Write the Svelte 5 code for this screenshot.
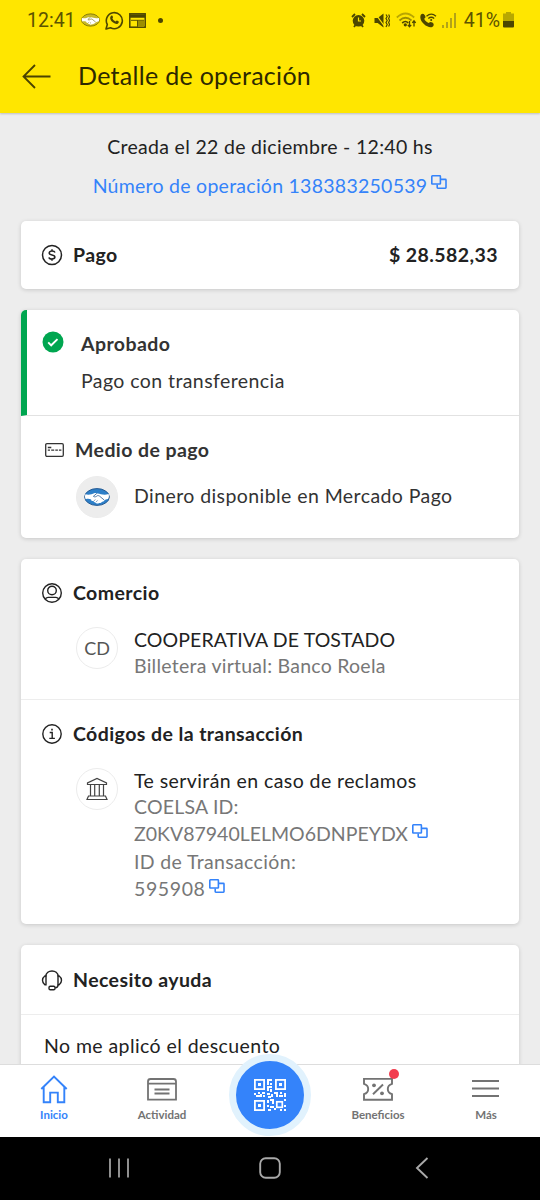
<script>
	const tabs = [
		{ id: 'inicio', label: 'Inicio', active: true },
		{ id: 'actividad', label: 'Actividad' },
		{ id: 'qr', label: '' },
		{ id: 'beneficios', label: 'Beneficios', badge: true },
		{ id: 'mas', label: 'Más' },
	];

	// Loose modules of the QR symbol, [x, y, width, height]
	const modules = [
		[13, 0, 5, 2],
		[13, 2, 2, 4],
		[16, 4, 2, 2],
		[13, 7, 5, 2],
		[13, 9, 2, 3],
		[16, 10, 2, 3],
		[0, 14, 2, 2],
		[4, 13, 2, 2],
		[6, 15, 2, 3],
		[2, 16, 4, 2],
		[8, 13, 3, 2],
		[9, 16, 2, 2],
		[13, 14, 3, 2],
		[17, 15, 2, 3],
		[14, 17, 3, 2],
		[20, 13, 4, 2],
		[22, 15, 2, 3],
		[26, 13, 2, 2],
		[25, 16, 4, 2],
		[30, 14, 2, 4],
		[16, 20, 4, 2],
		[18, 22, 2, 3],
		[13, 21, 2, 3],
		[13, 26, 2, 2],
		[16, 27, 4, 2],
		[14, 30, 3, 2],
		[20, 29, 2, 2],
		[30, 20, 2, 2],
		[30, 26, 2, 2],
		[26, 30, 2, 2],
		[30, 30, 2, 2],
	];
</script>

{#snippet copyIcon()}
	<svg class="copy" width="16" height="14" viewBox="0 0 16 14" fill="none" stroke="#3483fa" stroke-width="1.6">
		<rect x=".8" y=".8" width="8.6" height="8.2" rx=".6" />
		<path d="M9.8 4.4h4.6q.6 0 .6.6v7.6q0 .6-.6.6H6.8q-.6 0-.6-.6V9.4" />
	</svg>
{/snippet}

{#snippet handshake(width, height, tone, ink)}
	<svg {width} {height} viewBox="0 0 26 18">
		<ellipse cx="13" cy="9" rx="12.3" ry="8.4" fill={tone} stroke={ink} stroke-width="1" />
		<path
			d="M1.4 6.2C5 7.4 8 6 10.2 5.2c1.4-.4 2.4.3 3.4.2 3 .2 5.6 2.200 11 .7.7 2 .3 3.900-.6 4.900-1.700.1-2.900.6-3.700 1.500-.5 1.300-2 1.200-2.500 1.400-.8 1.300-2.200.8-2.700 1-1.200 1-3 .6-3.700-.5-1.200-.1-1.700-.8-1.900-1.400-1.600.2-2.400-.6-2.400-1.600C5.400 10.700 3.500 10.500 1.700 11.200.9 9.800.8 7.900 1.400 6.200z"
			fill="#fff" />
		<path
			d="M12.800 5.400 9.400 8.300c1.200 1.100 2.800.4 4-.6.9-.2 1.500 0 2.100.4l4.700 3.900M10.200 12.700l1-1.100M12.300 13.600l1.200-1"
			fill="none"
			stroke={ink}
			stroke-width=".8" />
	</svg>
{/snippet}

<div class="screen">
	<header>
		<div class="status">
			<span class="clock">12:41</span>
			<div class="notifications">
				{@render handshake(19, 14, '#c7b928', '#6b6200')}
				<svg class="whatsapp" width="19" height="19" viewBox="0 0 19 19">
					<path d="M1 18l1.300-4.500A8 8 0 1 1 5.500 16.700z" fill="none" stroke="#4d4600" stroke-width="1.600" stroke-linejoin="round" />
					<path d="M6.200 4.800c.8-.6 1.400-.1 1.800 1.300.2.700-.6 1.100-.5 1.500.6 1.300 1.600 2.200 2.900 2.800.5.100.9-1 1.500-.9 1.900.8 2.300 1.100 1.700 2.200-1 1.800-3.200 1.500-5.500-.1C5.300 9.700 4.200 6.600 6.200 4.800z" fill="#4d4600" />
				</svg>
				<svg class="news" width="17" height="15" viewBox="0 0 17 15" fill="none" stroke="#4d4600">
					<rect x=".8" y=".8" width="15.400" height="13.400" stroke-width="1.500" />
					<path d="M1 3h15" stroke-width="3.500" />
					<path d="M2 7.300h13M8.500 7.300v6.500" stroke-width=".9" />
					<path d="M9 8h6v5H9z" fill="#4d4600" stroke="none" opacity=".55" />
				</svg>
				<i class="more"></i>
			</div>
			<div class="indicators">
				<svg width="15" height="15" viewBox="0 0 15 15" fill="none" stroke="#4d4600">
					<path d="M1 4 4 1M14 4l-3-3M3 14l1.500-2M12 14l-1.500-2" stroke-width="1.800" />
					<circle cx="7.500" cy="7.800" r="5.800" fill="#4d4600" stroke="none" />
					<path d="M7.500 4.500V8H10" stroke="#ffe600" stroke-width="1.200" />
				</svg>
				<svg class="mute" width="16" height="15" viewBox="0 0 16 15" fill="#4d4600">
					<path d="M.5 5h3.200L9.500.6v13.800L3.700 10H.5z" />
					<path d="M1.500.8 11 14" stroke="#ffe600" stroke-width="1.200" />
					<path d="M12 1.500l1.200 2L12 5.500l1.200 2-1.200 2 1.200 2L12 14M14.600 1.500l1 2-1 2 1 2-1 2 1 2-1 2" fill="none" stroke="#4d4600" stroke-width="1.200" />
				</svg>
				<svg class="wifi" width="21" height="16" viewBox="0 0 21 16" fill="none" stroke="#4d4600" stroke-width="1.700">
					<path d="M.8 5.500q8.700-8 17.400 0" opacity=".4" />
					<path d="M3.500 8.500q6-5.500 12 0" opacity=".55" />
					<path d="M6.200 11q3.300-3 6 0" />
					<circle cx="9.300" cy="12.800" r=".8" fill="#4d4600" />
					<path d="M13.500 9v5.500M11.800 12.800l1.700 2 1.700-2M18 14.500V9M16.300 10.800l1.700-2 1.700 2" stroke-width="1.300" />
				</svg>
				<svg class="call" width="17" height="15" viewBox="0 0 17 15">
					<path d="M1 1.500Q3-.3 4.800 2.200C6 4 5.500 4.800 4.200 5.700c.8 2 2.400 3.500 4.600 4.300 1-1.200 2-1.600 3.600-.4 2 1.500 1.600 3-.2 4.300C8 16-2.500 8 1 1.500z" fill="#4d4600" />
					<path d="M6.500 3.200q4.800-4 9.500 0M8.300 5.500q3-2.500 5.900 0" fill="none" stroke="#4d4600" stroke-width="1.300" />
					<circle cx="11.200" cy="7" r="1" fill="#4d4600" />
				</svg>
				<svg class="signal" width="15" height="15" viewBox="0 0 15 15" fill="#b3a317">
					<rect x="0" y="12" width="2" height="3" />
					<rect x="4" y="9" width="2" height="6" />
					<rect x="8" y="5" width="2" height="10" />
					<rect x="12" y="0" width="2" height="15" />
				</svg>
				<span class="percent">41%</span>
				<svg width="11" height="16" viewBox="0 0 11 16">
					<path d="M3 0h5v1.500h3V9H0V1.500h3z" fill="#b8a800" />
					<path d="M0 9h11v5.500q0 1-1 1H1q-1 0-1-1z" fill="#4d4600" />
				</svg>
			</div>
		</div>
		<div class="title-bar">
			<svg width="29" height="25" viewBox="0 0 29 25" fill="none" stroke="#4a4300" stroke-width="1.800">
				<path d="M13 1 1.500 12.500 13 24M1.500 12.500H28.500" />
			</svg>
			<h1>Detalle de operación</h1>
		</div>
	</header>

	<main>
		<p class="created">Creada el 22 de diciembre - 12:40 hs</p>
		<p class="operation"><span>Número de operación 138383250539</span>{@render copyIcon()}</p>

		<section class="card payment">
			<svg width="22" height="22" viewBox="0 0 22 22" fill="none" stroke="#222">
				<circle cx="11" cy="11" r="9.500" stroke-width="1.500" />
				<path d="M14 8.400Q13.500 7 11 7T8.200 8.900q0 1.500 2.800 2t2.900 2.200Q13.900 15 11 15T8 13.400M11 5.300V7M11 15v1.700" stroke-width="1.500" />
			</svg>
			<h2>Pago</h2>
			<strong>$ 28.582,33</strong>
		</section>

		<section class="card method">
			<div class="approved">
				<svg width="22" height="22" viewBox="0 0 22 22">
					<circle cx="11" cy="11" r="10.500" fill="#00a650" />
					<path d="m6.200 11.300 3 3 6.300-6.200" fill="none" stroke="#fff" stroke-width="1.900" />
				</svg>
				<div>
					<h2>Aprobado</h2>
					<p>Pago con transferencia</p>
				</div>
			</div>
			<div class="heading wide">
				<svg width="19" height="14" viewBox="0 0 19 14" fill="none" stroke="#333" stroke-width="1.300">
					<rect x=".7" y=".7" width="17.600" height="12.600" rx="1.200" />
					<path d="M2.800 4.500h3.500M2.800 7.200h2.200M6.200 7.200h3M10.300 7.200h2.600M13.900 7.200h2.500" />
				</svg>
				<h2>Medio de pago</h2>
			</div>
			<div class="item funds">
				<div class="avatar filled">{@render handshake(26, 18, '#2d7fc8', '#285b92')}</div>
				<p>Dinero disponible en Mercado Pago</p>
			</div>
		</section>

		<section class="card shop">
			<div class="merchant">
				<div class="heading">
					<svg width="22" height="22" viewBox="0 0 22 22" fill="none" stroke="#222" stroke-width="1.400">
						<circle cx="11" cy="11" r="9.300" />
						<circle cx="11" cy="8.500" r="4.300" />
						<path d="M4.300 17.500Q4.800 15.400 7 15.400h8q2.200 0 2.700 2.100" />
					</svg>
					<h2>Comercio</h2>
				</div>
				<div class="item">
					<div class="avatar initials">CD</div>
					<div class="lines">
						<p class="name">COOPERATIVA DE TOSTADO</p>
						<p class="muted wallet">Billetera virtual: Banco Roela</p>
					</div>
				</div>
			</div>
			<div class="codes">
				<div class="heading">
					<svg width="22" height="22" viewBox="0 0 22 22" fill="none" stroke="#222" stroke-width="1.400">
						<circle cx="11" cy="11" r="9.200" />
						<path d="M8.700 9.500h2.500v5.700M8.300 15.400h5.600" />
						<path d="M10.200 6.700h1.600" stroke-width="1.800" />
					</svg>
					<h2>Códigos de la transacción</h2>
				</div>
				<div class="item">
					<div class="avatar">
						<svg width="22" height="24" viewBox="0 0 22 24" fill="none" stroke="#444" stroke-width="1.200">
							<path d="M1.500 7.500V6L11 1.500 20.500 6v1.500zM4.500 7.500v11M8.700 7.500v11M13.300 7.500v11M17.500 7.500v11M2.500 19h17l1.500 3.500H1z" />
						</svg>
					</div>
					<div class="lines">
						<p class="claim">Te servirán en caso de reclamos</p>
						<p class="muted coelsa">COELSA ID:</p>
						<p class="muted code"><span>Z0KV87940LELMO6DNPEYDX</span>{@render copyIcon()}</p>
						<p class="muted label">ID de Transacción:</p>
						<p class="muted number"><span>595908</span>{@render copyIcon()}</p>
					</div>
				</div>
			</div>
		</section>

		<section class="card help">
			<div class="heading">
				<svg width="22" height="22" viewBox="0 0 22 22" fill="none" stroke="#222" stroke-width="1.400">
					<path d="M5 15.700H3.800Q1.500 14 1.500 11.300T3.800 7H5zM17 15.700h1.200q2.300-1.700 2.300-4.400T18.200 7H17z" />
					<path d="M4.800 7.500C5 .2 17 .2 17.200 7.500M17.200 15.500q-.2 3.300-3 3.300" />
					<rect x="8" y="17.300" width="6" height="3.400" rx="1.300" />
				</svg>
				<h2>Necesito ayuda</h2>
			</div>
			<p class="option">No me aplicó el descuento</p>
		</section>
	</main>

	<nav class="tabs">
		{#each tabs as tab (tab.id)}
			<div class="tab" class:active={tab.active}>
				{#if tab.id === 'inicio'}
					<svg width="28" height="30" viewBox="0 0 28 30" fill="none" stroke="currentColor" stroke-width="1.900">
						<path d="M1.300 15 14 2.500 26.700 15M3.700 12.700v15.500h6.500V18.600h7.600v9.600h6.500V12.700" />
					</svg>
				{:else if tab.id === 'actividad'}
					<svg width="30" height="30" viewBox="0 0 30 30" fill="none" stroke="currentColor" stroke-width="1.800">
						<path d="M1 25.600V7.500Q1 5 3.500 5h23Q29 5 29 7.500v18.100zM1 9.600h28M7.500 15.500h15M7.500 19.500h15" />
					</svg>
				{:else if tab.id === 'beneficios'}
					<div class="ticket">
						<svg width="30" height="30" viewBox="0 0 30 30" fill="none" stroke="currentColor" stroke-width="1.900">
							<path d="M1 4.900h28v5q-4.200 1.200-4.200 5.100T29 20.200v5.500H1v-5.500q4.200-1.300 4.200-5.200T1 9.900z" />
							<path d="M20 10.500 10 20.300" />
							<circle cx="11" cy="11.300" r="1.900" fill="currentColor" stroke="none" />
							<circle cx="19" cy="19.300" r="1.900" fill="currentColor" stroke="none" />
						</svg>
						{#if tab.badge}<i class="badge"></i>{/if}
					</div>
				{:else if tab.id === 'mas'}
					<svg width="28" height="30" viewBox="0 0 28 30" stroke="currentColor" stroke-width="1.900">
						<path d="M0 7h27M0 14.500h27M0 22h27" />
					</svg>
				{:else}
					<div class="scan">
						<svg width="32" height="32" viewBox="0 0 32 32" fill="#fff">
							{#each [[0, 0], [21, 0], [0, 21]] as [x, y]}
								<rect x={x + 0.9} y={y + 0.9} width="9.200" height="9.200" fill="none" stroke="#fff" stroke-width="1.800" />
								<rect x={x + 4} y={y + 4} width="3" height="3" />
							{/each}
							<rect x="22.800" y="22.800" width="5.500" height="5.500" fill="none" stroke="#fff" stroke-width="1.700" />
							{#each modules as [x, y, w, h]}
								<rect {x} {y} width={w} height={h} />
							{/each}
						</svg>
					</div>
				{/if}
				<span>{tab.label}</span>
			</div>
		{/each}
	</nav>

	<div class="system">
		<svg width="20" height="22" viewBox="0 0 20 22" stroke="#a9a9a9" stroke-width="1.700">
			<path d="M1 1.500v19M10 1.500v19M19 1.500v19" />
		</svg>
		<svg class="home" width="22" height="22" viewBox="0 0 22 22" fill="none" stroke="#a9a9a9" stroke-width="1.900">
			<rect x="1.200" y="1.200" width="19.600" height="19.600" rx="5.500" />
		</svg>
		<svg class="back" width="14" height="22" viewBox="0 0 14 22" fill="none" stroke="#a9a9a9" stroke-width="1.900">
			<path d="M12.500 1 2 11l10.500 10" />
		</svg>
	</div>
</div>

<style>
	:global(body) {
		margin: 0;
		background: #ededed;
	}

	.screen {
		display: flex;
		flex-direction: column;
		width: 540px;
		height: 1200px;
		overflow: hidden;
		background: #ededed;
		color: #222;
		font-family: Lato, 'Open Sans', sans-serif;
		font-size: 19.5px;
		line-height: 26px;
		letter-spacing: 0.42px;
	}

	h1,
	h2,
	p {
		margin: 0;
		font-size: inherit;
		font-weight: 400;
		white-space: nowrap;
	}

	h2 {
		font-weight: 700;
	}

	svg {
		display: block;
		flex: none;
	}

	header {
		flex: none;
		height: 113px;
		background: #ffe600;
		box-shadow: 0 1px 2px rgba(0, 0, 0, 0.2);
	}

	.status {
		display: flex;
		align-items: center;
		height: 40px;
		padding: 0 26px 0 27px;
		color: #5c5300;
		font-family: Roboto, sans-serif;
		letter-spacing: 0;
	}

	.clock,
	.percent {
		padding-top: 1px;
	}

	.notifications {
		display: flex;
		align-items: center;
		margin-left: 5px;

		.whatsapp {
			margin-left: 5px;
		}

		.news {
			margin-left: 5px;
		}

		.more {
			width: 5px;
			height: 5px;
			margin-left: 12px;
			border-radius: 50%;
			background: #4d4600;
		}
	}

	.indicators {
		display: flex;
		align-items: center;
		margin-left: auto;

		.mute {
			margin-left: 8px;
		}

		.wifi {
			margin-left: 6px;
		}

		.call {
			margin-left: 3px;
		}

		.signal {
			margin-left: 5px;
		}

		.percent {
			margin: 0 3px 0 7px;
		}
	}

	.title-bar {
		display: flex;
		align-items: center;
		height: 73px;
		padding-left: 22px;

		h1 {
			margin-left: 27px;
			padding-bottom: 3px;
			color: #2d2900;
			font-size: 25px;
			line-height: 32px;
			letter-spacing: 0.3px;
		}
	}

	main {
		flex: 1;
		min-height: 0;
		overflow: hidden;
		padding: 21px 21px 0;
	}

	.created,
	.operation {
		display: flex;
		justify-content: center;
		letter-spacing: 0.31px;
	}

	.operation {
		margin: 13px 0 22px;
		color: #3483fa;
		letter-spacing: 0.26px;
	}

	.copy {
		margin: 4px 0 0 4px;
	}

	.operation .copy {
		margin-top: 2px;
	}

	.card {
		box-sizing: border-box;
		margin-bottom: 21px;
		border-radius: 5px;
		background: #fff;
		box-shadow: 0 1px 4px rgba(0, 0, 0, 0.16);
	}

	.payment {
		display: flex;
		align-items: center;
		height: 68px;
		padding: 0 21px 1px 20px;

		h2 {
			margin-left: 10px;
		}

		strong {
			margin-left: auto;
			padding-top: 1px;
		}
	}

	.method {
		height: 228px;
		overflow: hidden;
		color: #333;
	}

	.approved {
		display: flex;
		box-sizing: border-box;
		height: 106px;
		padding: 21px 15px;
		border-left: 6px solid #00a650;
		border-bottom: 1px solid #e2e2e2;

		div {
			margin-left: 17px;
		}

		p {
			margin-top: 11px;
		}
	}

	.heading {
		display: flex;
		align-items: center;
		padding-left: 20px;

		h2 {
			margin-left: 10px;
		}
	}

	.wide {
		padding: 21px 0 0 24px;

		h2 {
			margin-left: 11px;
		}
	}

	.item {
		display: flex;
		padding-left: 55px;
	}

	.funds {
		align-items: center;
		margin-top: 13px;

		p {
			margin-left: 16px;
			padding-bottom: 3px;
		}
	}

	.avatar {
		display: flex;
		flex: none;
		align-items: center;
		justify-content: center;
		box-sizing: border-box;
		width: 42px;
		height: 42px;
		border: 1px solid #ececec;
		border-radius: 50%;
	}

	.filled {
		background: #ededed;
	}

	.initials {
		color: #555;
		font-size: 18px;
		letter-spacing: 0;
	}

	.lines {
		margin-left: 16px;
	}

	.name {
		letter-spacing: 0.1px;
	}

	.muted {
		display: flex;
		color: #777;
	}

	.wallet {
		letter-spacing: 0.25px;
	}

	.shop {
		height: 365px;
	}

	.merchant {
		box-sizing: border-box;
		height: 141px;
		padding-top: 21px;
		border-bottom: 1px solid #ededed;
	}

	.merchant .item,
	.codes .item {
		margin-top: 21px;
	}

	.codes {
		padding-top: 21px;
	}

	.coelsa {
		letter-spacing: 0.2px;
	}

	.code,
	.label,
	.number {
		line-height: 27.5px;
	}

	.code {
		letter-spacing: 0;
	}

	.label {
		letter-spacing: 0.35px;
	}

	.number {
		letter-spacing: 0.6px;
	}

	.help {
		height: 200px;

		.heading {
			box-sizing: border-box;
			height: 70px;
			border-bottom: 1px solid #ededed;
		}
	}

	.option {
		padding: 18px 0 0 23px;
	}

	.tabs {
		display: flex;
		flex: none;
		box-sizing: border-box;
		height: 73px;
		border-top: 1px solid #ddd;
		background: #fff;
		color: #737373;
		font-size: 11.5px;
		font-weight: 700;
		line-height: 14px;
		letter-spacing: 0;
	}

	.tab {
		position: relative;
		display: flex;
		flex: 1;
		flex-direction: column;
		align-items: center;
		gap: 4px;
		padding-top: 9px;
	}

	.active {
		color: #3483fa;
	}

	.ticket {
		position: relative;
	}

	.badge {
		position: absolute;
		top: -5px;
		right: -6px;
		width: 10px;
		height: 10px;
		border-radius: 50%;
		background: #f23d4f;
	}

	/* The scan button rises above the tab bar */
	.scan {
		position: absolute;
		top: -11px;
		display: flex;
		align-items: center;
		justify-content: center;
		width: 68px;
		height: 68px;
		border: 7px solid #e1f2fd;
		border-radius: 50%;
		background: #3483fa;
	}

	.system {
		display: flex;
		flex: none;
		align-items: center;
		box-sizing: border-box;
		height: 63px;
		padding: 0 0 2px 109px;
		background: #000;

		.home {
			margin-left: 130px;
		}

		.back {
			margin-left: 134px;
		}
	}
</style>
